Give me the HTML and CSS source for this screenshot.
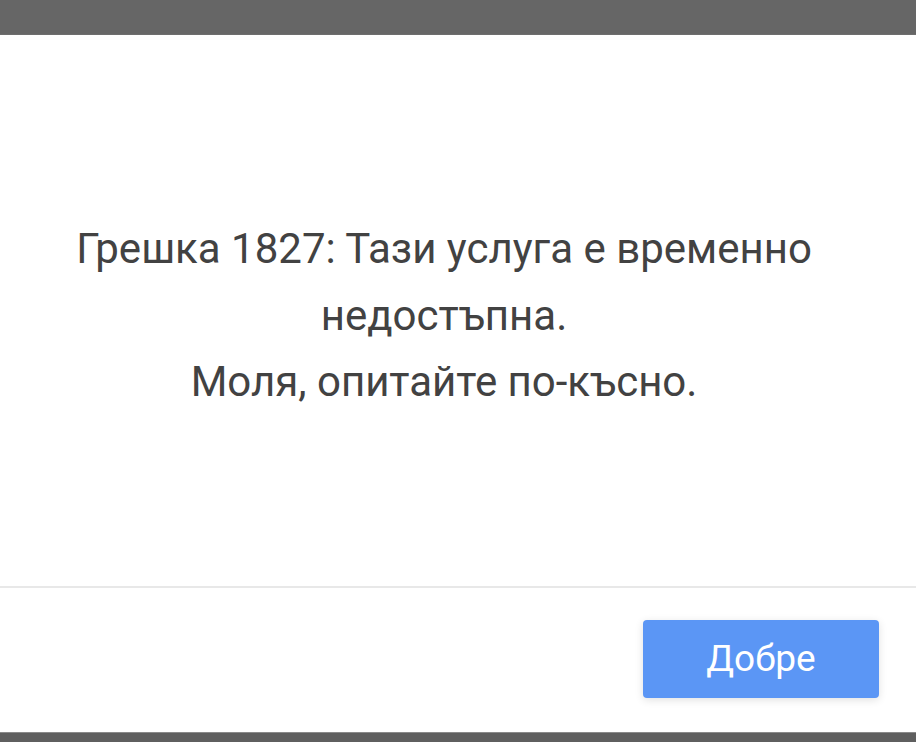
FILE: index.html
```html
<!DOCTYPE html>
<html lang="bg">
<head>
<meta charset="utf-8">
<link rel="stylesheet" href="styles.css">
</head>
<body>
<div class="screen">
  <div class="topbar"></div>
  <div class="dialog">
    <div class="body">
      <p class="message">Грешка 1827: Тази услуга е временно недостъпна.<br>Моля, опитайте по-късно.</p>
    </div>
    <div class="divider"></div>
    <div class="footer">
      <button class="ok">Добре</button>
    </div>
  </div>
  <div class="bottombar"></div>
</div>
</body>
</html>
```
FILE: styles.css
```css
html, body { margin: 0; padding: 0; }
body { width: 916px; height: 742px; overflow: hidden; font-family: Roboto, "Noto Sans", sans-serif; background: #fff; }
.screen { display: flex; flex-direction: column; height: 742px; }
.topbar { height: 34px; background: #666666; border-bottom: 1px solid #6e6e6e; }
.dialog { flex: 1; display: flex; flex-direction: column; background: #fff; }
.body { height: 551px; display: flex; align-items: center; justify-content: center; padding: 0 60px 0 32px; box-sizing: border-box; }
.message { margin: 0; text-align: center; font-size: 42px; line-height: 66.5px; color: #424242; padding-top: 11px; }
.divider { height: 2px; background: #e8e8e8; }
.footer { flex: 1; display: flex; align-items: center; justify-content: flex-end; padding-right: 37px; }
.ok { width: 236px; height: 78px; border: none; border-radius: 4px; background: #5b96f5; color: #fff; font-family: Roboto, sans-serif; font-size: 37px; box-shadow: 0 2px 8px rgba(0,0,0,0.12); padding: 0; margin-top: -3px; }
.bottombar { height: 9px; background: #5f5f5f; border-top: 1px solid #8a8a8a; }
```
